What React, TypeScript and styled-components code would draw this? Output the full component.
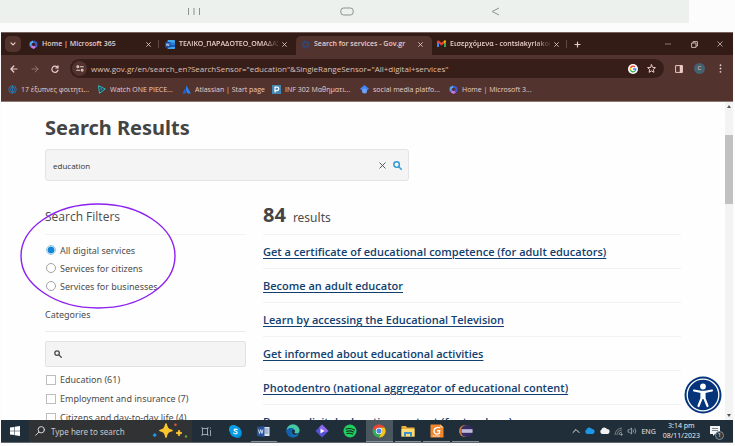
import React from "react";
import styled, { createGlobalStyle, css } from "styled-components";

const uiFont = `"Open Sans", "Noto Sans", sans-serif`;
const pageFont = `"Noto Sans", "Open Sans", sans-serif`;

const GlobalStyle = createGlobalStyle`
  * { box-sizing: border-box; }
  body { margin: 0; background: #fcfcfc; font-family: ${pageFont}; color: #4c4c4c; }
  button { border: 0; padding: 0; margin: 0; background: none; font: inherit; color: inherit; }
  svg { display: block; flex: none; }
`;

const Screen = styled.div`
  height: 100vh;
  display: flex;
  flex-direction: column;
  overflow: hidden;
  padding-bottom: 3px;
`;

const PhoneBar = styled.nav`
  flex: none;
  height: 23px;
  margin-right: 46px;
  padding: 0 189px 0 186px;
  background: #ecf1ed;
  display: flex;
  align-items: center;
  justify-content: space-between;
`;

const PhoneKey = styled.button`
  display: flex;
`;

const Desktop = styled.div`
  flex: 1;
  min-height: 0;
  margin: 9px 2px 0 1px;
  display: flex;
  flex-direction: column;
`;

const Chrome = styled.header`
  flex: none;
  background: #52332e;
  color: #e8ceca;
  font-family: ${uiFont};
  border-top: 1px solid #75615d;
  border-bottom: 1px solid #8e7773;
`;

const TabStrip = styled.div`
  height: 22px;
  background: #331b16;
  display: flex;
  align-items: stretch;
`;

const TabMenu = styled.button`
  width: 16px;
  height: 16px;
  margin: 3px 3px 0 4px;
  border-radius: 5px;
  background: #52332e;
  display: flex;
  align-items: center;
  justify-content: center;
`;

const Tab = styled.div<{ $active?: boolean; $divider?: boolean }>`
  flex: 0 1 136px;
  min-width: 0;
  display: flex;
  align-items: center;
  gap: 4px;
  padding: 0 9px 0 5px;
  font-size: 7px;
  font-weight: 600;
  position: relative;
  ${(p) => p.$active && css`
    margin-top: 3px;
    padding-bottom: 3px;
    background: #52332e;
    border-radius: 5px 5px 0 0;
  `}
  ${(p) => p.$divider && css`
    &::after {
      content: "";
      position: absolute;
      right: 1px;
      top: 7px;
      height: 8px;
      border-right: 1px solid #5f4640;
    }
  `}
`;

const TabTitle = styled.span<{ $fade?: boolean }>`
  flex: 1;
  min-width: 0;
  white-space: nowrap;
  overflow: hidden;
  line-height: 12px;
  ${(p) => p.$fade && css`mask-image: linear-gradient(to right, #000 85%, rgba(0, 0, 0, 0.2) 98%);`}
`;

const GlyphButton = styled.button<{ $w?: number }>`
  width: ${(p) => (p.$w ? `${p.$w}px` : "auto")};
  display: flex;
  flex: none;
  align-items: center;
  justify-content: center;
`;

const WindowKeys = styled.div`
  margin-left: auto;
  display: flex;
`;

const Toolbar = styled.div`
  height: 27px;
  padding: 0 3px 0 2px;
  display: flex;
  align-items: center;
`;

const AddressBar = styled.div`
  flex: 1;
  height: 19px;
  margin: 0 5px;
  padding: 0 4px 0 2px;
  border-radius: 10px;
  background: #381e19;
  display: flex;
  align-items: center;
`;

const SiteInfo = styled.button`
  width: 15px;
  height: 15px;
  border-radius: 50%;
  background: #52332e;
  display: flex;
  align-items: center;
  justify-content: center;
`;

const AddressInput = styled.input`
  flex: 1;
  min-width: 0;
  border: 0;
  padding: 0 0 0 4px;
  background: none;
  outline: none;
  color: #dcc0b4;
  font-family: ${uiFont};
  font-size: 8px;
`;

const Avatar = styled.button`
  width: 11px;
  height: 11px;
  margin: 0 5px;
  border-radius: 50%;
  background: #45606e;
  font-size: 6px;
  line-height: 11px;
`;

const Bookmarks = styled.nav`
  height: 19px;
  padding: 0 0 4px 7px;
  display: flex;
  align-items: center;
  font-size: 7px;
  font-weight: 500;
`;

const Bookmark = styled.a<{ $w: number }>`
  width: ${(p) => p.$w}px;
  display: flex;
  align-items: center;
  gap: 4px;
  color: inherit;
  text-decoration: none;
  white-space: nowrap;
`;

const Viewport = styled.div`
  flex: 1;
  min-height: 0;
  overflow: hidden;
  position: relative;
  display: flex;
  background: #fefefe;
`;

const Page = styled.main`
  flex: 1;
  min-width: 0;
  padding: 12px 44px 0;
`;

const Title = styled.h1`
  margin: 0;
  font-size: 20px;
  line-height: 28px;
  font-weight: 700;
  color: #444;
`;

const SearchBox = styled.form`
  width: 364px;
  height: 32px;
  margin-top: 7px;
  padding: 0 6px 0 7px;
  border: 1px solid #e4e4e4;
  border-radius: 3px;
  background: #f4f4f4;
  display: flex;
  align-items: center;
  gap: 6px;
`;

const SearchInput = styled.input`
  flex: 1;
  min-width: 0;
  padding: 0;
  border: 0;
  outline: none;
  background: none;
  color: #333;
  font-family: "Open Sans", sans-serif;
  font-size: 8px;
`;

const Columns = styled.div`
  display: grid;
  grid-template-columns: 201px 1fr;
  column-gap: 17px;
  margin-top: 20px;
`;

const SectionTitle = styled.h2`
  margin: 0;
  height: 34px;
  padding-top: 8px;
  border-bottom: 1px solid #f2f2f2;
  font-family: ${uiFont};
  font-size: 12px;
  line-height: 16px;
  font-weight: 400;
`;

const RadioGroup = styled.fieldset`
  margin: 6px 0 0;
  padding: 0;
  border: 0;
`;

const Choice = styled.label<{ $h: number }>`
  height: ${(p) => p.$h}px;
  padding-left: 1px;
  display: flex;
  align-items: center;
  gap: 4px;
  font-size: 9px;
  white-space: nowrap;
`;

const Radio = styled.input`
  appearance: none;
  width: 10px;
  height: 10px;
  margin: 0;
  border: 1px solid #a3a3a3;
  border-radius: 50%;
  background: #fff;
  &:checked {
    border-color: #9bcbe9;
    background: radial-gradient(circle, #1586d6 0 3px, #fff 4px);
  }
`;

const Checkbox = styled.input`
  appearance: none;
  width: 10px;
  height: 10px;
  margin: 0;
  border: 1px solid #bdbdbd;
  background: #fff;
`;

const GroupTitle = styled.h3`
  margin: 10px 0 9px;
  height: 27px;
  border-bottom: 1px solid #ececec;
  font-size: 9px;
  line-height: 20px;
  font-weight: 400;
`;

const FilterSearch = styled.label`
  height: 26px;
  margin-bottom: 3px;
  padding: 0 8px;
  border: 1px solid #e2e2e2;
  border-radius: 2px;
  background: #f4f4f4;
  display: flex;
  align-items: center;
  gap: 6px;
`;

const Count = styled.h2`
  margin: 0;
  height: 34px;
  border-bottom: 1px solid #f2f2f2;
  display: flex;
  align-items: baseline;
  gap: 7px;
  font-size: 12px;
  line-height: 28px;
  font-weight: 400;
  strong { font-size: 20px; color: #444; }
`;

const Results = styled.ul`
  margin: 0;
  padding: 0;
  list-style: none;
`;

const Result = styled.li`
  height: 34px;
  border-bottom: 1px solid #f2f2f2;
  font-family: ${uiFont};
  font-size: 11px;
  line-height: 34px;
  white-space: nowrap;
  a {
    color: #123e70;
    font-weight: 600;
    text-underline-offset: 2px;
  }
`;

const ScrollTrack = styled.div`
  flex: none;
  width: 8px;
  background: #f3f3f3;
  display: flex;
  flex-direction: column;
  align-items: center;
  justify-content: space-between;
  padding: 3px 0;
`;

const ScrollThumb = styled.div`
  width: 8px;
  height: 22%;
  margin: 27px 0 auto;
  background: #c1c1c1;
`;

const AccessButton = styled.button`
  position: absolute;
  right: 11px;
  bottom: 6px;
`;

const Marker = styled.svg`
  position: absolute;
  left: 18px;
  top: 100px;
`;

const Taskbar = styled.footer`
  flex: none;
  height: 23px;
  background: #1f2e38;
  border-bottom: 1px solid #62696e;
  color: #e4e7e9;
  display: flex;
  align-items: stretch;
`;

const StartButton = styled.button`
  width: 28px;
  display: flex;
  align-items: center;
  justify-content: center;
`;

const TaskSearch = styled.label`
  width: 163px;
  padding: 0 4px 0 6px;
  background: #303234;
  display: flex;
  align-items: center;
  gap: 6px;
`;

const TaskInput = styled.input`
  flex: 1;
  min-width: 0;
  padding: 0;
  border: 0;
  outline: none;
  background: none;
  font-family: ${pageFont};
  font-size: 8px;
  &::placeholder { color: #c8c9ca; opacity: 1; }
`;

const Apps = styled.div`
  width: 288px;
  display: flex;
`;

const AppButton = styled.button<{ $open?: boolean; $active?: boolean }>`
  flex: 1;
  display: flex;
  align-items: center;
  justify-content: center;
  margin: 0 1px;
  background: ${(p) => (p.$active ? "#4b575f" : "none")};
  box-shadow: ${(p) => (p.$open ? "inset 0 -1px #84929a" : "none")};
`;

const Tray = styled.div`
  margin-left: auto;
  padding-right: 13px;
  display: flex;
  align-items: center;
  gap: 4px;
  font-size: 7px;
`;

const Clock = styled.time`
  margin: 0 6px 0 3px;
  text-align: center;
  line-height: 10px;
`;

const Notice = styled.button`
  position: relative;
`;

const Badge = styled.span`
  position: absolute;
  right: -4px;
  bottom: -4px;
  width: 9px;
  height: 9px;
  border-radius: 50%;
  background: #2e373d;
  border: 1px solid #879096;
  font-size: 6px;
  line-height: 7px;
  text-align: center;
`;

const line = { fill: "none", stroke: "currentColor", strokeLinecap: "round" as const, strokeLinejoin: "round" as const };

const Cross = ({ size = 5, w = 1 }: { size?: number; w?: number }) => (
  <svg width={size} height={size} viewBox="0 0 6 6" {...line} strokeWidth={w}><path d="M.7.7l4.6 4.6M5.3.7L.7 5.3" /></svg>
);

const Lens = ({ size, flip, w = 2 }: { size: number; flip?: boolean; w?: number }) => (
  <svg width={size} height={size} viewBox="0 0 12 12" {...line} strokeWidth={w}>
    {flip ? <><circle cx="7.5" cy="4.5" r="3.8" /><path d="M4.6 7.4L.8 11.2" /></> : <><circle cx="4.6" cy="4.6" r="3.4" /><path d="M7.3 7.3l3.6 3.6" /></>}
  </svg>
);

const M365 = () => (
  <svg width="9" height="9" viewBox="0 0 18 18" fill="none" strokeWidth="4.4" strokeLinejoin="round">
    <path d="M9 2.8L3.4 6v6.5" stroke="#55a5ee" />
    <path d="M3.4 11.5L9 15.2l3-1.7" stroke="#8c63dd" />
    <path d="M9 2.8L14.6 6v6L9 15.2" stroke="#4655cb" />
    <path d="M5 13l4 2.2 3-1.7" stroke="#ca77df" />
  </svg>
);

const WordDoc = () => (
  <svg width="10" height="9" viewBox="0 0 20 18">
    <rect x="5" y="0" width="15" height="18" rx="1.5" fill="#41a5ee" />
    <path d="M5 5h15v4.5H5z" fill="#2b7cd3" /><path d="M5 9.5h15V14H5z" fill="#185abd" />
    <rect y="4" width="11" height="11" rx="1" fill="#164ba0" />
    <path d="M2.5 7l1.4 5 1.6-5 1.6 5 1.4-5" fill="none" stroke="#fff" strokeWidth="1" />
  </svg>
);

const GovMark = () => (
  <svg width="9" height="9" viewBox="0 0 18 18" fill="none" stroke="#28508f" strokeWidth="2">
    <circle cx="9" cy="9" r="7" strokeDasharray="3 1" /><circle cx="9" cy="9" r="4.4" />
  </svg>
);

const Gmail = () => (
  <svg width="9" height="8" viewBox="0 0 18 14">
    <path d="M0 2v11h4V5z" fill="#4285f4" /><path d="M18 2v11h-4V5z" fill="#34a853" />
    <path d="M0 2.5C0 0 2.5-.6 4 .7l5 4 5-4c1.500-1.300 4-.7 4 1.800L14 6 9 9.800 4 6z" fill="#ea4335" /><path d="M14 .7c1.500-1.300 4-.7 4 1.800L14 6z" fill="#fbbc04" />
  </svg>
);

const GoogleG = () => (
  <svg width="10" height="10" viewBox="0 0 20 20" fill="none" strokeWidth="2.700">
    <circle cx="10" cy="10" r="10" fill="#fff" />
    <path d="M14 6a5.600 5.600 0 0 0-9 1.500" stroke="#ea4335" /><path d="M5 7.500a5.600 5.600 0 0 0 0 5" stroke="#fbbc04" />
    <path d="M5 12.500a5.600 5.600 0 0 0 8.700 1.700" stroke="#34a853" /><path d="M13.700 14.200a5.600 5.600 0 0 0 1.900-4.200H10" stroke="#4285f4" />
  </svg>
);

const bookmarks = [
  { label: "17 έξυπνες φοιτητι...", w: 89, icon: <svg width="9" height="9" viewBox="0 0 18 18" fill="none" stroke="#2c74aa" strokeWidth="2"><circle cx="9" cy="9" r="7.500" /><ellipse cx="9" cy="9" rx="4" ry="4.500" /><path d="M9 1v16" /></svg> },
  { label: "Watch ONE PIECE...", w: 85, icon: <svg width="9" height="9" viewBox="0 0 18 18" fill="#193d49" stroke="#36b9be" strokeWidth="2" strokeLinejoin="round"><path d="M3 1.500L16.500 8 5 16.500z" /><path d="M7.500 6.500l3 2-2.500 2z" strokeWidth="1.200" /></svg> },
  { label: "Atlassian | Start page", w: 90, icon: <svg width="9" height="9" viewBox="0 0 18 18"><path d="M5.500 8c2 2 2.500 5 1.500 9H1z" fill="#2068d8" /><path d="M9 1l8.500 16H11C8 12 6.500 7 9 1z" fill="#2684ff" /></svg> },
  { label: "INF 302 Μαθηματι...", w: 88, icon: <svg width="9" height="9" viewBox="0 0 18 18"><path d="M0 0h18v18H0z" fill="#4386b4" /><path d="M6 15V4h4a3.500 3.500 0 0 1 0 7H6" fill="none" stroke="#fff" strokeWidth="2.500" /></svg> },
  { label: "social media platfo...", w: 89, icon: <svg width="9" height="9" viewBox="0 0 18 18"><path d="M9 0l9 7.500-4 3.500a5.500 5.500 0 0 1-10 0L0 7.500z" fill="#4285f4" /><circle cx="9" cy="12" r="5" fill="#6f9ff3" /></svg> },
  { label: "Home | Microsoft 3...", w: 90, icon: <M365 /> },
];

const results = [
  "Get a certificate of educational competence (for adult educators)",
  "Become an adult educator",
  "Learn by accessing the Educational Television",
  "Get informed about educational activities",
  "Photodentro (national aggregator of educational content)",
  "Browse digital education content (for teachers)",
];

const apps = [
  { name: "Task View", icon: <svg width="11" height="11" viewBox="0 0 22 22" fill="none" stroke="#b8c0c5" strokeWidth="1.600"><path d="M2 2v3h12V2M2 20v-3h12v3M3 5v12M13 5v12M19 3v2M19 8v12" /></svg> },
  { name: "Skype", icon: <svg width="13" height="13" viewBox="0 0 26 26"><circle cx="9" cy="9" r="9" fill="#0da6e8" /><circle cx="17" cy="17" r="9" fill="#0785d5" /><circle cx="13" cy="13" r="11" fill="#079be4" /><path d="M16.500 9.500c-2-2-6.500-1.500-6.500.7 0 3 6.500 1.800 6.500 5.200 0 2.700-5.300 3-7 .5" fill="none" stroke="#fff" strokeWidth="2.200" strokeLinecap="round" /></svg> },
  { name: "Word", open: true, icon: <svg width="13" height="11" viewBox="0 0 26 22"><path d="M11 2h14v18H11z" fill="#dce5f2" /><path d="M15 6h8M15 10h8M15 14h8" stroke="#3a65aa" strokeWidth="1.500" /><path d="M0 2l15-2v22L0 20z" fill="#28539b" /><path d="M3 7l2 8 2.500-8L10 15l2-8" fill="none" stroke="#fff" strokeWidth="1.500" /></svg> },
  { name: "Edge", icon: <svg width="14" height="14" viewBox="0 0 28 28"><circle cx="14" cy="14" r="13" fill="#1687d2" /><path d="M1 12C3-3 25-3 27 12c0 7-7 8-10 6 4-6-2-11-8-10-4 .5-7 2-8 4z" fill="#46c9a0" /><path d="M1 13c3-6 12-7 16-2-6-1-9 4-6 9 2 4 8 5 13 2C15 32 0 25 1 13z" fill="#1261af" /><path d="M11 15c0-4 6-5 7-1 0 2-2 3-1 4 3 2 7 1 9-1-1 3-4 5-8 5-4 0-7-3-7-7z" fill="#20303a" /></svg> },
  { name: "Clipchamp", icon: <svg width="14" height="14" viewBox="0 0 28 28"><path d="M14 1l13 13-13 13L1 14z" fill="#5650d3" strokeLinejoin="round" /><path d="M14 1l13 13-6 3L8 7z" fill="#8d67f0" /><path d="M11 9l8 5-8 5z" fill="#fff" /></svg> },
  { name: "Spotify", icon: <svg width="14" height="14" viewBox="0 0 28 28"><circle cx="14" cy="14" r="13" fill="#20cf60" /><path d="M6 10c6-2 12-1 17 2M7 14.500c5-1.500 10-1 14 1.500M8 19c4-1 8-.7 11 1.200" fill="none" stroke="#162a22" strokeWidth="2.300" strokeLinecap="round" /></svg> },
  { name: "Chrome", active: true, open: true, icon: <svg width="14" height="14" viewBox="0 0 28 28"><circle cx="14" cy="14" r="13" fill="#34a853" /><path d="M2.700 7.500a13 13 0 0 1 22.600 0H14l-5.600 9.700z" fill="#ea4335" /><path d="M25.300 7.500A13 13 0 0 1 14 27l5.700-9.800a6.500 6.500 0 0 0-5.700-9.700z" fill="#fbc116" /><circle cx="14" cy="14" r="6.500" fill="#fff" /><circle cx="14" cy="14" r="5" fill="#4285f4" /></svg> },
  { name: "File Explorer", open: true, icon: <svg width="14" height="12" viewBox="0 0 28 24"><path d="M1 2h9l2 3h15v18H1z" fill="#e9ad38" /><path d="M1 8h26v15H1z" fill="#fddc78" /><path d="M6 23v-9h16v9h-4v-5h-8v5z" fill="#3c92cc" /></svg> },
  { name: "PDF Reader", open: true, icon: <svg width="14" height="14" viewBox="0 0 28 28"><path d="M1 1h20l6 6v20H1z" fill="#f3872d" /><path d="M21 1v6h6z" fill="#ffd2a7" /><path d="M20 8c-5-3-12 0-12 6.500 0 6 6 7 10.500 4l.7-5H14" fill="none" stroke="#fff" strokeWidth="2.800" /><path d="M5 24h15" stroke="#fff" strokeWidth="1.500" /></svg> },
  { name: "Eclipse", open: true, icon: <svg width="14" height="14" viewBox="0 0 28 28"><circle cx="12" cy="14" r="12" fill="#cf803e" /><circle cx="15.500" cy="14" r="12" fill="#352a64" /><path d="M5 14h22" stroke="#cfc9e4" strokeWidth="7" /><path d="M5 12.500h22M5 15.500h22" stroke="#9b92bf" strokeWidth=".8" /></svg> },
];

export default function App() {
  return (
    <>
      <GlobalStyle />
      <Screen>
        <PhoneBar aria-label="Phone navigation">
          <PhoneKey aria-label="Recents"><svg width="16" height="9" viewBox="0 0 16 9" stroke="#8b918d"><path d="M2.500 1v7M8 1v7M13.500 1v7" /></svg></PhoneKey>
          <PhoneKey aria-label="Home"><svg width="14" height="9" viewBox="0 0 14 9" fill="none" stroke="#8b918d"><rect x=".8" y="1" width="12.400" height="7" rx="2.800" /></svg></PhoneKey>
          <PhoneKey aria-label="Back"><svg width="9" height="9" viewBox="0 0 9 9" fill="none" stroke="#8b918d"><path d="M8 1L1.200 4.500 8 8" /></svg></PhoneKey>
        </PhoneBar>

        <Desktop>
          <Chrome>
            <TabStrip>
              <TabMenu aria-label="Search tabs"><svg width="6" height="4" viewBox="0 0 6 4" {...line} strokeWidth="1.200"><path d="M1 .8l2 2 2-2" /></svg></TabMenu>
              <Tab $divider><M365 /><TabTitle>Home | Microsoft 365</TabTitle><GlyphButton aria-label="Close tab"><Cross /></GlyphButton></Tab>
              <Tab><WordDoc /><TabTitle $fade>ΤΕΛΙΚΟ_ΠΑΡΑΔΟΤΕΟ_ΟΜΑΔΑΣ</TabTitle><GlyphButton aria-label="Close tab"><Cross /></GlyphButton></Tab>
              <Tab $active><GovMark /><TabTitle>Search for services - Gov.gr</TabTitle><GlyphButton aria-label="Close tab"><Cross /></GlyphButton></Tab>
              <Tab $divider><Gmail /><TabTitle $fade>Εισερχόμενα - contsiakyriakou</TabTitle><GlyphButton aria-label="Close tab"><Cross /></GlyphButton></Tab>
              <GlyphButton $w={18} aria-label="New tab"><svg width="7" height="7" viewBox="0 0 7 7" {...line} strokeWidth="1.200"><path d="M3.500 1v5M1 3.500h5" /></svg></GlyphButton>
              <WindowKeys>
                <GlyphButton $w={26} aria-label="Minimize"><svg width="6" height="6" viewBox="0 0 6 6" stroke="#a78f8a" strokeWidth=".8"><path d="M0 3h6" /></svg></GlyphButton>
                <GlyphButton $w={26} aria-label="Restore"><svg width="7" height="7" viewBox="0 0 7 7" fill="none" stroke="#d8c4c0" strokeWidth=".9"><path d="M.6 2h4.400v4.400H.6zM2 2V.6h4.400V5H5" /></svg></GlyphButton>
                <GlyphButton $w={26} aria-label="Close window"><Cross size={6} w={0.7} /></GlyphButton>
              </WindowKeys>
            </TabStrip>
            <Toolbar>
              <GlyphButton $w={21} aria-label="Back"><svg width="8" height="8" viewBox="0 0 8 8" {...line} strokeWidth="1.200"><path d="M7 4H1M3.800 1L.9 4l2.900 3" /></svg></GlyphButton>
              <GlyphButton $w={21} aria-label="Forward"><svg width="8" height="8" viewBox="0 0 8 8" {...line} stroke="#967670"><path d="M1 4h6M4.200 1l2.900 3-2.900 3" /></svg></GlyphButton>
              <GlyphButton $w={20} aria-label="Reload"><svg width="8" height="8" viewBox="0 0 8 8" {...line} strokeWidth="1.200"><path d="M6.600 2.600A3.100 3.100 0 1 0 7 5M7 .8v2.200H4.800" /></svg></GlyphButton>
              <AddressBar>
                <SiteInfo aria-label="Site information"><svg width="8" height="7" viewBox="0 0 8 7" {...line} strokeWidth="1.100"><circle cx="1.800" cy="1.800" r=".9" /><path d="M4.300 1.800h3M.7 5.200h3" /><circle cx="6.200" cy="5.200" r=".9" /></svg></SiteInfo>
                <AddressInput aria-label="Address" defaultValue={'www.gov.gr/en/search_en?SearchSensor="education"&SingleRangeSensor="All+digital+services"'} />
                <GlyphButton $w={18} aria-label="Search with Google"><GoogleG /></GlyphButton>
                <GlyphButton $w={18} aria-label="Bookmark"><svg width="9" height="9" viewBox="0 0 24 24" {...line} strokeWidth="2.600"><path d="M12 2l3 7 7.500.7-5.700 5 1.700 7.500L12 18.300l-6.500 3.900 1.700-7.500-5.700-5L9 9z" /></svg></GlyphButton>
              </AddressBar>
              <GlyphButton $w={20} aria-label="Side panel"><svg width="8" height="8" viewBox="0 0 8 8" fill="none" stroke="#ecc9c3"><path d="M.6.6h6.800v6.800H.6z" /><path d="M6 0v8" strokeWidth="2.500" /></svg></GlyphButton>
              <Avatar aria-label="Profile">C</Avatar>
              <GlyphButton $w={20} aria-label="Menu"><svg width="3" height="9" viewBox="0 0 3 9" fill="currentColor"><circle cx="1.500" cy="1.200" r=".9" /><circle cx="1.500" cy="4.500" r=".9" /><circle cx="1.500" cy="7.800" r=".9" /></svg></GlyphButton>
            </Toolbar>
            <Bookmarks aria-label="Bookmarks">
              {bookmarks.map((b) => <Bookmark href="#" key={b.label} $w={b.w}>{b.icon}{b.label}</Bookmark>)}
            </Bookmarks>
          </Chrome>

          <Viewport>
            <Page>
              <Title>Search Results</Title>
              <SearchBox>
                <SearchInput aria-label="Search services" defaultValue="education" />
                <GlyphButton $w={9} type="button" aria-label="Clear"><Cross size={7} w={0.8} /></GlyphButton>
                <GlyphButton $w={9} type="button" aria-label="Search">
                  <svg width="9" height="9" viewBox="0 0 12 12" fill="none" stroke="#2c98d5" strokeWidth="1.900" strokeLinecap="round"><circle cx="4.800" cy="4.800" r="3.700" /><path d="M7.600 7.600l3.400 3.400" /></svg>
                </GlyphButton>
              </SearchBox>
              <Columns>
                <aside>
                  <SectionTitle>Search Filters</SectionTitle>
                  <RadioGroup aria-label="Services">
                    {["All digital services", "Services for citizens", "Services for businesses"].map((t, i) => (
                      <Choice $h={18} key={t}><Radio type="radio" name="services" defaultChecked={i === 0} />{t}</Choice>
                    ))}
                  </RadioGroup>
                  <GroupTitle>Categories</GroupTitle>
                  <FilterSearch><Lens size={8} /><SearchInput aria-label="Search categories" /></FilterSearch>
                  {["Education (61)", "Employment and insurance (7)", "Citizens and day-to-day life (4)"].map((t) => (
                    <Choice $h={19} key={t}><Checkbox type="checkbox" />{t}</Choice>
                  ))}
                </aside>
                <section>
                  <Count><strong>84</strong> results</Count>
                  <Results>{results.map((r) => <Result key={r}><a href="#">{r}</a></Result>)}</Results>
                </section>
              </Columns>
            </Page>
            <ScrollTrack>
              <svg width="4" height="3" viewBox="0 0 4 3"><path d="M2 0l2 3H0z" fill="#555" /></svg>
              <ScrollThumb />
              <svg width="4" height="3" viewBox="0 0 4 3"><path d="M2 3l2-3H0z" fill="#555" /></svg>
            </ScrollTrack>
            <AccessButton aria-label="Accessibility options">
              <svg width="38" height="38" viewBox="0 0 38 38">
                <circle cx="19" cy="19" r="18.500" fill="#05347b" /><circle cx="19" cy="19" r="15.800" fill="none" stroke="#fff" strokeWidth="1.300" />
                <circle cx="19" cy="10.500" r="2.900" fill="#fff" />
                <path d="M10 14.500l7 1.300h4l7-1.300M19 16v6M17.500 16.500v6l-3 7.500M20.500 16.500v6l3 7.500" fill="none" stroke="#fff" strokeWidth="2.200" strokeLinecap="round" strokeLinejoin="round" />
              </svg>
            </AccessButton>
            <Marker width="158" height="108" viewBox="0 0 158 108" fill="none" pointerEvents="none"><ellipse cx="79" cy="54" rx="77" ry="52" stroke="#8c20f2" strokeWidth="1.400" /></Marker>
          </Viewport>

          <Taskbar>
            <StartButton aria-label="Start"><svg width="10" height="10" viewBox="0 0 20 20" fill="#fff"><path d="M0 3l8.500-1.200v7.700H0zM9.500 1.600L20 0v9.500H9.500zM0 10.500h8.500v7.700L0 17zM9.500 10.500H20V20L9.500 18.400z" /></svg></StartButton>
            <TaskSearch>
              <Lens size={10} flip w={1.1} />
              <TaskInput aria-label="Search Windows" placeholder="Type here to search" />
              <svg width="36" height="16" viewBox="0 0 36 16">
                <path d="M14 1c1 4.500 2 5.500 6 6.500-4 1-5 2-6 6.500-1-4.500-2-5.500-6-6.500 4-1 5-2 6-6.500z" fill="#fcc62d" stroke="#fcc62d" strokeWidth="1.600" strokeLinejoin="round" />
                <path d="M27 7c.6 2 1 2.400 3 3-2 .6-2.400 1-3 3-.6-2-1-2.400-3-3 2-.6 2.400-1 3-3z" fill="#fcc62d" stroke="#fcc62d" strokeLinejoin="round" />
                <path d="M2.500 10.500l1.800 1.300-1.300 1.900-1.900-1.300z" fill="#2296da" stroke="#2296da" /><circle cx="23.500" cy="1.700" r="1.200" fill="#e85930" /><circle cx="34" cy="13.500" r="1.200" fill="#6aa33b" />
              </svg>
            </TaskSearch>
            <Apps>
              {apps.map((a) => <AppButton key={a.name} aria-label={a.name} $open={a.open} $active={a.active}>{a.icon}</AppButton>)}
            </Apps>
            <Tray>
              <svg width="8" height="6" viewBox="0 0 8 6" {...line}><path d="M1 4.500l3-3 3 3" /></svg>
              <svg width="11" height="8" viewBox="0 0 22 16"><path d="M6 14a5 5 0 0 1-1-9 6 6 0 0 1 11-1c4 0 6 3 5 6s-2 4-5 4z" fill="#1d96e6" /></svg>
              <svg width="11" height="8" viewBox="0 0 22 16"><path d="M6 14a5 5 0 0 1-1-9 6 6 0 0 1 11-1c4 0 6 3 5 6s-2 4-5 4z" fill="#f0f0f0" /></svg>
              <svg width="9" height="9" viewBox="0 0 9 9" fill="none" stroke="#8e989e" strokeWidth=".8"><path d="M1 8a7 7 0 0 1 7-7M3 8a5 5 0 0 1 5-5M5 8a3 3 0 0 1 3-3" /><circle cx="7.500" cy="7.500" r=".8" fill="#c9cfd3" /></svg>
              <svg width="10" height="8" viewBox="0 0 10 8" fill="none" stroke="#a5adb2" strokeWidth=".8"><path d="M1 2.800h1.300L4.500 1v6L2.300 5.200H1zM6 2.500q1 1.500 0 3M7.800 1.200q2 2.800 0 5.600" /></svg>
              <span>ENG</span>
              <Clock>3:14 pm<br />08/11/2023</Clock>
              <Notice aria-label="Notifications"><svg width="10" height="10" viewBox="0 0 10 10"><path d="M0 0h10v8H5L3 10V8H0z" fill="#f1f3f4" /><path d="M2 2.500h6M2 4.500h6" stroke="#4d585f" strokeWidth=".7" /></svg><Badge>1</Badge></Notice>
            </Tray>
          </Taskbar>
        </Desktop>
      </Screen>
    </>
  );
}
